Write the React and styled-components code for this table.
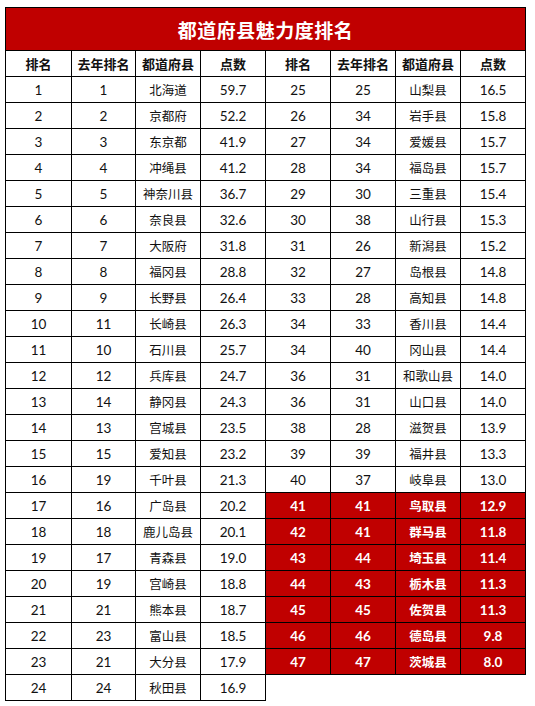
import React from 'react';
import styled, { createGlobalStyle } from 'styled-components';

const GlobalStyle = createGlobalStyle`
  body {
    margin: 0;
    background: #ffffff;
    font-family: Lato, "Noto Sans CJK SC", sans-serif;
  }
`;

const red = '#c00000';

const Page = styled.div`
  padding: 7px 0 0 5px;
`;

const Table = styled.table`
  border-collapse: collapse;
  table-layout: fixed;
  width: 521px;
  color: #111;
`;

const TitleCell = styled.th`
  height: 42px;
  padding: 0;
  background: ${red};
  color: #fff;
  font-family: "Noto Sans CJK SC", sans-serif;
  font-size: 19px;
  font-weight: 700;
  border: 1px solid #000;
  letter-spacing: 0.5px;
`;

const HeadCell = styled.th`
  height: 25px;
  padding: 0;
  font-family: "Noto Sans CJK SC", sans-serif;
  font-size: 13px;
  font-weight: 700;
  border: 1px solid #000;
`;

const Cell = styled.td`
  height: 25px;
  padding: 0;
  text-align: center;
  font-size: 13.5px;
  font-weight: ${({ hot }) => (hot ? 700 : 400)};
  color: ${({ hot }) => (hot ? '#fff' : '#111')};
  background: ${({ hot }) => (hot ? red : 'transparent')};
  border: 1px solid #000;
`;

const NameCell = styled(Cell)`
  font-family: "Noto Sans CJK SC", sans-serif;
  font-size: 12.5px;
`;

const data = [
  [1, 1, '北海道', '59.7'],
  [2, 2, '京都府', '52.2'],
  [3, 3, '东京都', '41.9'],
  [4, 4, '冲绳县', '41.2'],
  [5, 5, '神奈川县', '36.7'],
  [6, 6, '奈良县', '32.6'],
  [7, 7, '大阪府', '31.8'],
  [8, 8, '福冈县', '28.8'],
  [9, 9, '长野县', '26.4'],
  [10, 11, '长崎县', '26.3'],
  [11, 10, '石川县', '25.7'],
  [12, 12, '兵库县', '24.7'],
  [13, 14, '静冈县', '24.3'],
  [14, 13, '宫城县', '23.5'],
  [15, 15, '爱知县', '23.2'],
  [16, 19, '千叶县', '21.3'],
  [17, 16, '广岛县', '20.2'],
  [18, 18, '鹿儿岛县', '20.1'],
  [19, 17, '青森县', '19.0'],
  [20, 19, '宫崎县', '18.8'],
  [21, 21, '熊本县', '18.7'],
  [22, 23, '富山县', '18.5'],
  [23, 21, '大分县', '17.9'],
  [24, 24, '秋田县', '16.9'],
  [25, 25, '山梨县', '16.5'],
  [26, 34, '岩手县', '15.8'],
  [27, 34, '爱媛县', '15.7'],
  [28, 34, '福岛县', '15.7'],
  [29, 30, '三重县', '15.4'],
  [30, 38, '山行县', '15.3'],
  [31, 26, '新潟县', '15.2'],
  [32, 27, '岛根县', '14.8'],
  [33, 28, '高知县', '14.8'],
  [34, 33, '香川县', '14.4'],
  [34, 40, '冈山县', '14.4'],
  [36, 31, '和歌山县', '14.0'],
  [36, 31, '山口县', '14.0'],
  [38, 28, '滋贺县', '13.9'],
  [39, 39, '福井县', '13.3'],
  [40, 37, '岐阜县', '13.0'],
  [41, 41, '鸟取县', '12.9'],
  [42, 41, '群马县', '11.8'],
  [43, 44, '埼玉县', '11.4'],
  [44, 43, '栃木县', '11.3'],
  [45, 45, '佐贺县', '11.3'],
  [46, 46, '德岛县', '9.8'],
  [47, 47, '茨城县', '8.0'],
];

const headers = ['排名', '去年排名', '都道府县', '点数'];
const widths = [66, 64, 65, 65, 65, 65, 65, 65];

const Entry = ({ row }) => {
  const hot = row[0] >= 41;
  return (
    <>
      <Cell hot={hot}>{row[0]}</Cell>
      <Cell hot={hot}>{row[1]}</Cell>
      <NameCell hot={hot}>{row[2]}</NameCell>
      <Cell hot={hot}>{row[3]}</Cell>
    </>
  );
};

const App = () => {
  const left = data.slice(0, 24);
  const right = data.slice(24);

  return (
    <Page>
      <GlobalStyle />
      <Table>
        <colgroup>
          {widths.map((w, i) => <col key={i} style={{ width: w }} />)}
        </colgroup>
        <thead>
          <tr>
            <TitleCell colSpan={8}>都道府县魅力度排名</TitleCell>
          </tr>
          <tr>
            {[...headers, ...headers].map((h, i) => <HeadCell key={i}>{h}</HeadCell>)}
          </tr>
        </thead>
        <tbody>
          {left.map((row, i) => (
            <tr key={i}>
              <Entry row={row} />
              {right[i] && <Entry row={right[i]} />}
            </tr>
          ))}
        </tbody>
      </Table>
    </Page>
  );
};

export default App;
